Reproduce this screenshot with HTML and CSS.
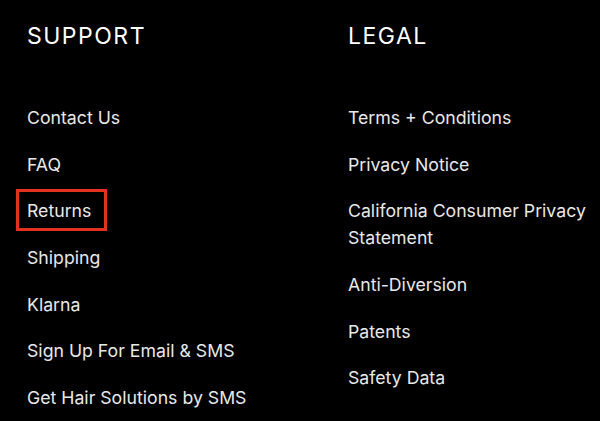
FILE: index.html
```html
<!DOCTYPE html>
<html lang="en">
<head>
  <meta charset="UTF-8" />
  <title>Footer Links</title>
  <link rel="stylesheet" href="styles.css">
</head>
<body>
  <footer class="footer">
    <div class="col">
      <h2>SUPPORT</h2>
      <ul>
        <li><a href="#">Contact Us</a></li>
        <li><a href="#">FAQ</a></li>
        <li><a href="#" class="marked">Returns</a></li>
        <li><a href="#">Shipping</a></li>
        <li><a href="#">Klarna</a></li>
        <li><a href="#">Sign Up For Email &amp; SMS</a></li>
        <li><a href="#">Get Hair Solutions by SMS</a></li>
      </ul>
    </div>
    <div class="col">
      <h2>LEGAL</h2>
      <ul>
        <li><a href="#">Terms + Conditions</a></li>
        <li><a href="#">Privacy Notice</a></li>
        <li><a href="#">California Consumer Privacy Statement</a></li>
        <li><a href="#">Anti-Diversion</a></li>
        <li><a href="#">Patents</a></li>
        <li><a href="#">Safety Data</a></li>
      </ul>
    </div>
  </footer>
</body>
</html>
```

FILE: styles.css
```css
* {
  margin: 0; padding: 0; box-sizing: border-box;
}
body {
  background: #000;
  font-family: Inter, 'Noto Sans', sans-serif;
  height: 421px;
  overflow: hidden;
}
.footer {
  display: grid;
  grid-template-columns: 321px 245px;
  padding: 22px 0 0 27px;
}
h2 {
  font-size: 23px;
  font-weight: 400;
  letter-spacing: 1.5px;
  color: #fff;
  line-height: 28px;
  margin-bottom: 54px;
}
ul {
  list-style: none;
  display: flex;
  flex-direction: column;
  gap: 19.7px;
}
li {
  font-size: 17.7px;
  line-height: 27px;
}
a {
  color: #e8e8e8;
  text-decoration: none;
}
.marked {
  position: relative;
}
.marked::after {
  content: "";
  position: absolute;
  left: -11px;
  top: -11px;
  right: -16px;
  bottom: -10px;
  border: 3px solid #e2321f;
}
```
